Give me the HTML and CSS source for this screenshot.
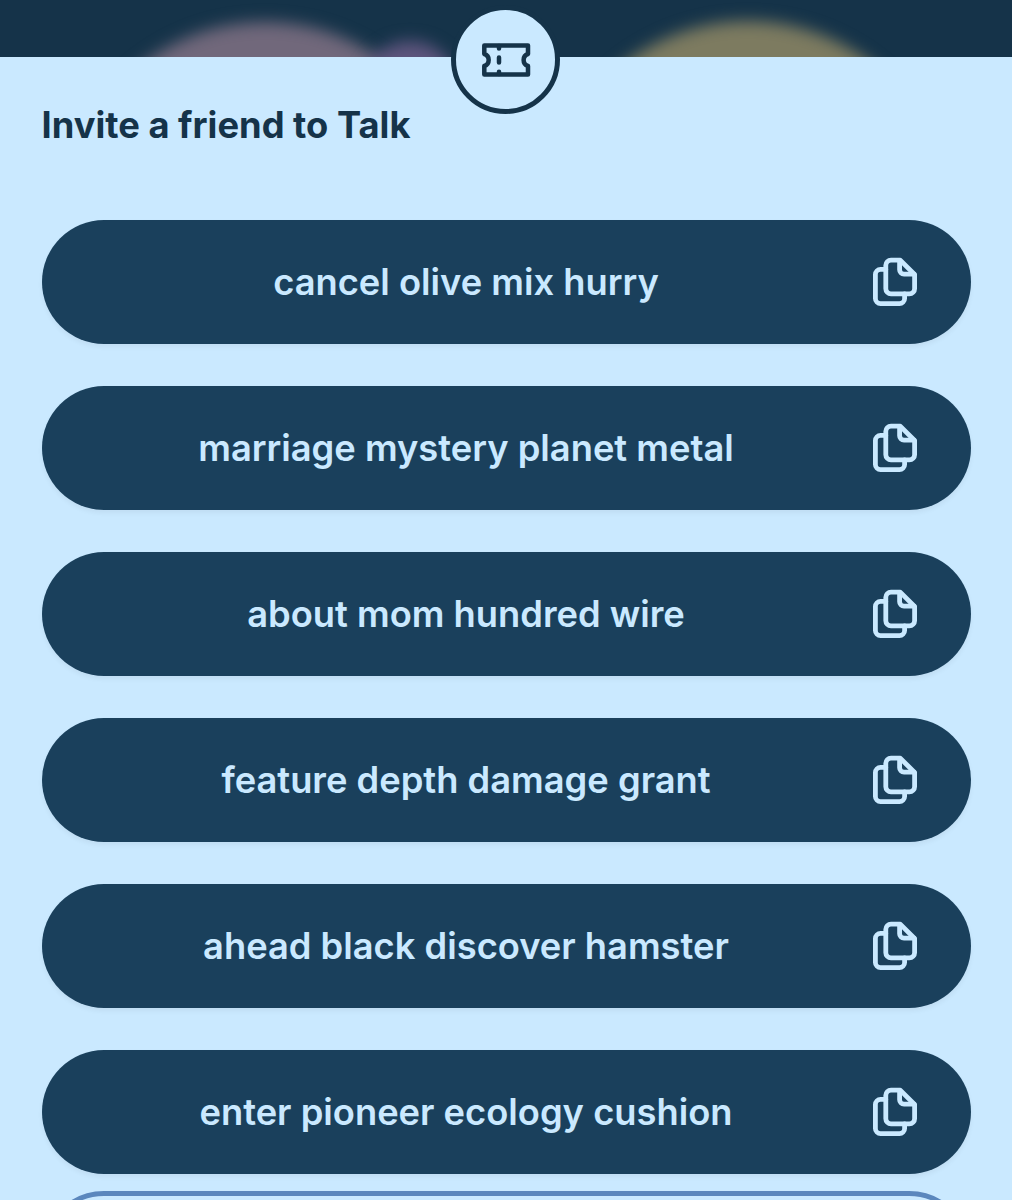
FILE: index.html
```html
<!DOCTYPE html>
<html lang="en">
<head>
  <meta charset="UTF-8">
  <title>Invite a friend to Talk</title>
  <link rel="stylesheet" href="styles.css">
</head>
<body>

<svg class="symbols" aria-hidden="true">
  <symbol id="copy" viewBox="0 0 50 52">
    <path d="M15.8 14.4h-5.2a5.2 5.2 0 0 0-5.2 5.2v23.9a5.2 5.2 0 0 0 5.2 5.2h18.8a5.2 5.2 0 0 0 5.2-5.2v-4.7"/>
    <path d="M29.3 5.1H21a5.2 5.2 0 0 0-5.2 5.2v23.4a5.2 5.2 0 0 0 5.2 5.2h18.4a5.2 5.2 0 0 0 5.2-5.2V19.5L30.2 5.1z"/>
    <path d="M29.6 5.6v9.2a4.4 4.4 0 0 0 4.4 4.4h10"/>
  </symbol>
</svg>

<div class="page">
  <!-- Blurred page behind the sheet -->
  <div class="backdrop">
    <div class="bubble pink"></div>
    <div class="bubble purple"></div>
    <div class="bubble yellow"></div>
  </div>

  <div class="sheet">
    <div class="badge">
      <svg width="52" height="36" viewBox="0 0 52 36">
        <path d="M4.3 3.6H48v8.4a6.3 6.3 0 0 0 0 12v8.4H4.3V24a6.3 6.3 0 0 0 0-12z"/>
        <path d="M19 4v2.4M19 15.6v5M19 29.8V32"/>
      </svg>
    </div>

    <h2>Invite a friend to Talk</h2>

    <div class="invites">
      <button class="invite"><span>cancel olive mix hurry</span><svg><use href="#copy"/></svg></button>
      <button class="invite"><span>marriage mystery planet metal</span><svg><use href="#copy"/></svg></button>
      <button class="invite"><span>about mom hundred wire</span><svg><use href="#copy"/></svg></button>
      <button class="invite"><span>feature depth damage grant</span><svg><use href="#copy"/></svg></button>
      <button class="invite"><span>ahead black discover hamster</span><svg><use href="#copy"/></svg></button>
      <button class="invite"><span>enter pioneer ecology cushion</span><svg><use href="#copy"/></svg></button>
    </div>

    <button class="close" aria-label="Close"></button>
  </div>
</div>

</body>
</html>
```
FILE: styles.css
```css
* {
  box-sizing: border-box;
}

body {
  margin: 0;
  font-family: Inter, sans-serif;
  background-color: #cae9ff;
}

.symbols {
  display: none;
}

.page {
  height: 1200px;
  overflow: hidden;
}

.backdrop {
  position: relative;
  height: 57px;
  overflow: hidden;
  background-color: #153349;
}

.bubble {
  position: absolute;
  border-radius: 50%;
  filter: blur(8px);
}

.pink {
  left: 65px;
  top: 22px;
  width: 400px;
  height: 400px;
  background-color: #71687b;
}

.purple {
  left: 362px;
  top: 41px;
  width: 96px;
  height: 96px;
  background-color: #5e557d;
}

.yellow {
  left: 546px;
  top: 21px;
  width: 404px;
  height: 404px;
  background-color: #7d7b60;
}

.sheet {
  position: relative;
  height: 1143px;
  padding: 45px 41.5px 0;
  background-color: #cae9ff;
}

.badge {
  position: absolute;
  top: -52px;
  left: 451.4px;
  display: flex;
  align-items: center;
  justify-content: center;
  width: 109px;
  height: 109px;
  border: 5.2px solid #153349;
  border-radius: 50%;
  background-color: #cae9ff;
}

svg {
  fill: none;
  stroke: #153349;
  stroke-width: 4.5;
  stroke-linecap: round;
  stroke-linejoin: round;
}

h2 {
  margin: 0;
  color: #153349;
  font-size: 36.3px;
  font-weight: 700;
  line-height: 46px;
}

.invites {
  display: flex;
  flex-direction: column;
  gap: 41.6px;
  margin-top: 72px;
}

.invite {
  display: flex;
  align-items: center;
  gap: 20px;
  height: 124.4px;
  padding: 0 51px 0 41px;
  border: none;
  border-radius: 63px;
  background-color: #1a405c;
  box-shadow: 0 3px 5px rgba(0, 0, 0, 0.05);
  color: #cae9ff;
  font-family: inherit;
  font-size: 36.3px;
  font-weight: 600;
  cursor: pointer;
}

.invite span {
  flex: 1;
  text-align: center;
}

.invite svg {
  width: 50px;
  height: 52px;
  margin-bottom: 2px;
  stroke: #cae9ff;
  stroke-width: 4.8;
}

.close {
  display: block;
  width: 100%;
  height: 124.5px;
  margin-top: 16.6px;
  border: 5.2px solid #5b87bd;
  border-radius: 63px;
  background-color: #cae9ff;
}
```
